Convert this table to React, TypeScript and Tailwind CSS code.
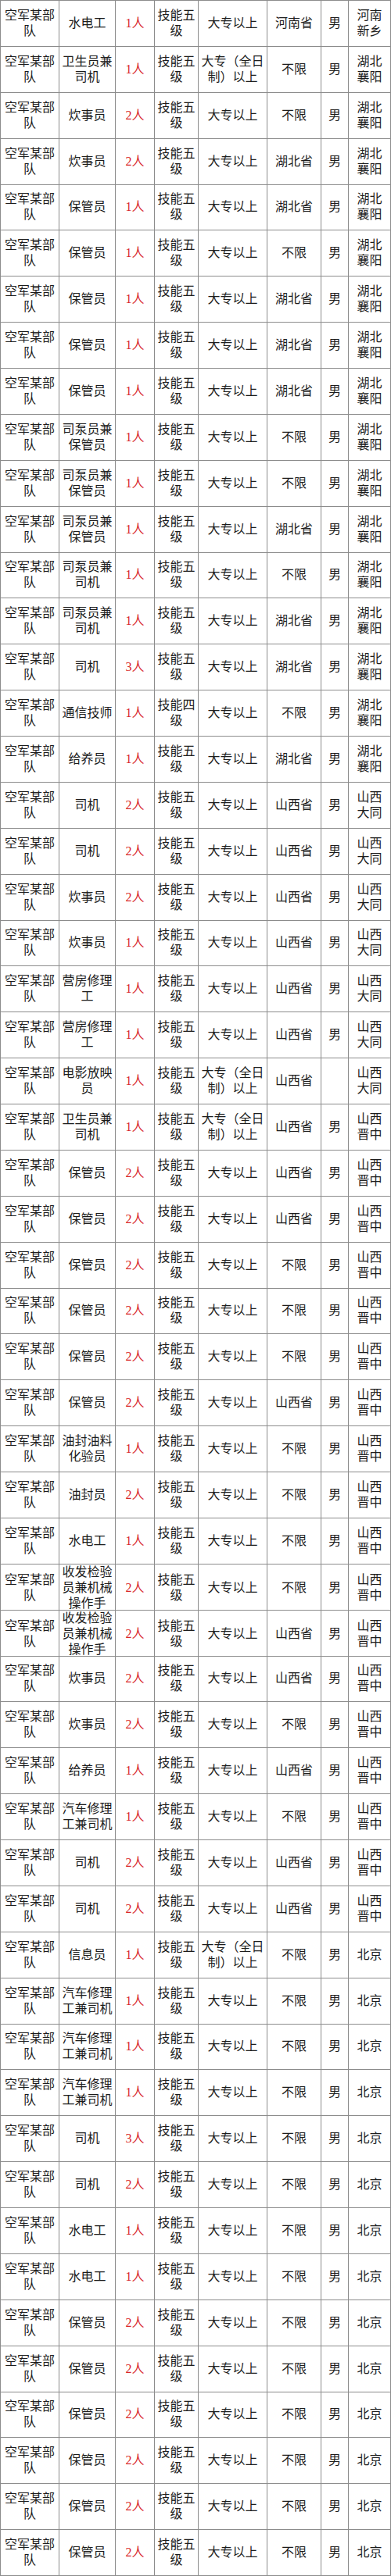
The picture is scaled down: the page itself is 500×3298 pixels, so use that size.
import React from "react";

type Row = [string, string, string, string, string, string, string];

const L5 = "技能五级";
const E1 = "大专以上";
const E2 = "大专（全日制）以上";

const rows: Row[] = [
  ["水电工", "1人", L5, E1, "河南省", "男", "河南新乡"],
  ["卫生员兼司机", "1人", L5, E2, "不限", "男", "湖北襄阳"],
  ["炊事员", "2人", L5, E1, "不限", "男", "湖北襄阳"],
  ["炊事员", "2人", L5, E1, "湖北省", "男", "湖北襄阳"],
  ["保管员", "1人", L5, E1, "湖北省", "男", "湖北襄阳"],
  ["保管员", "1人", L5, E1, "不限", "男", "湖北襄阳"],
  ["保管员", "1人", L5, E1, "湖北省", "男", "湖北襄阳"],
  ["保管员", "1人", L5, E1, "湖北省", "男", "湖北襄阳"],
  ["保管员", "1人", L5, E1, "湖北省", "男", "湖北襄阳"],
  ["司泵员兼保管员", "1人", L5, E1, "不限", "男", "湖北襄阳"],
  ["司泵员兼保管员", "1人", L5, E1, "不限", "男", "湖北襄阳"],
  ["司泵员兼保管员", "1人", L5, E1, "湖北省", "男", "湖北襄阳"],
  ["司泵员兼司机", "1人", L5, E1, "不限", "男", "湖北襄阳"],
  ["司泵员兼司机", "1人", L5, E1, "湖北省", "男", "湖北襄阳"],
  ["司机", "3人", L5, E1, "湖北省", "男", "湖北襄阳"],
  ["通信技师", "1人", "技能四级", E1, "不限", "男", "湖北襄阳"],
  ["给养员", "1人", L5, E1, "湖北省", "男", "湖北襄阳"],
  ["司机", "2人", L5, E1, "山西省", "男", "山西大同"],
  ["司机", "2人", L5, E1, "山西省", "男", "山西大同"],
  ["炊事员", "2人", L5, E1, "山西省", "男", "山西大同"],
  ["炊事员", "1人", L5, E1, "山西省", "男", "山西大同"],
  ["营房修理工", "1人", L5, E1, "山西省", "男", "山西大同"],
  ["营房修理工", "1人", L5, E1, "山西省", "男", "山西大同"],
  ["电影放映员", "1人", L5, E2, "山西省", "", "山西大同"],
  ["卫生员兼司机", "1人", L5, E2, "山西省", "男", "山西晋中"],
  ["保管员", "2人", L5, E1, "山西省", "男", "山西晋中"],
  ["保管员", "2人", L5, E1, "山西省", "男", "山西晋中"],
  ["保管员", "2人", L5, E1, "不限", "男", "山西晋中"],
  ["保管员", "2人", L5, E1, "不限", "男", "山西晋中"],
  ["保管员", "2人", L5, E1, "不限", "男", "山西晋中"],
  ["保管员", "2人", L5, E1, "山西省", "男", "山西晋中"],
  ["油封油料化验员", "1人", L5, E1, "不限", "男", "山西晋中"],
  ["油封员", "2人", L5, E1, "不限", "男", "山西晋中"],
  ["水电工", "1人", L5, E1, "不限", "男", "山西晋中"],
  ["收发检验员兼机械操作手", "2人", L5, E1, "不限", "男", "山西晋中"],
  ["收发检验员兼机械操作手", "2人", L5, E1, "山西省", "男", "山西晋中"],
  ["炊事员", "2人", L5, E1, "山西省", "男", "山西晋中"],
  ["炊事员", "2人", L5, E1, "不限", "男", "山西晋中"],
  ["给养员", "1人", L5, E1, "山西省", "男", "山西晋中"],
  ["汽车修理工兼司机", "1人", L5, E1, "不限", "男", "山西晋中"],
  ["司机", "2人", L5, E1, "山西省", "男", "山西晋中"],
  ["司机", "2人", L5, E1, "山西省", "男", "山西晋中"],
  ["信息员", "1人", L5, E2, "不限", "男", "北京"],
  ["汽车修理工兼司机", "1人", L5, E1, "不限", "男", "北京"],
  ["汽车修理工兼司机", "1人", L5, E1, "不限", "男", "北京"],
  ["汽车修理工兼司机", "1人", L5, E1, "不限", "男", "北京"],
  ["司机", "3人", L5, E1, "不限", "男", "北京"],
  ["司机", "2人", L5, E1, "不限", "男", "北京"],
  ["水电工", "1人", L5, E1, "不限", "男", "北京"],
  ["水电工", "1人", L5, E1, "不限", "男", "北京"],
  ["保管员", "2人", L5, E1, "不限", "男", "北京"],
  ["保管员", "2人", L5, E1, "不限", "男", "北京"],
  ["保管员", "2人", L5, E1, "不限", "男", "北京"],
  ["保管员", "2人", L5, E1, "不限", "男", "北京"],
  ["保管员", "2人", L5, E1, "不限", "男", "北京"],
  ["保管员", "2人", L5, E1, "不限", "男", "北京"],
];

const cell =
  "flex items-center justify-center text-center border-r border-[#8c8c8c] leading-[20px] break-all";

export default function App() {
  return (
    <div
      className="w-[500px] bg-white text-[16px] text-[#1c1c1c] border-t border-[#8c8c8c]"
      style={{ fontFamily: '"Liberation Serif", "Noto Sans CJK SC", serif' }}
    >
      {rows.map((r, i) => (
        <div
          key={i}
          className="grid grid-cols-[76px_72px_50px_56px_88px_69px_35px_54px] h-[58.875px] border-b border-[#8c8c8c]"
        >
          <div className={`${cell} border-l px-[4px]`}>空军某部队</div>
          <div
            className={`${cell} px-[3px] ${
              r[0].length > 8 ? "leading-[19px]" : ""
            }`}
          >
            {r[0]}
          </div>
          <div className={`${cell} px-[2px] text-[#d8262b]`}>{r[1]}</div>
          <div className={`${cell} px-[3px]`}>{r[2]}</div>
          <div className={`${cell} px-[3px]`}>{r[3]}</div>
          <div className={`${cell} px-[3px]`}>{r[4]}</div>
          <div className={`${cell} px-[2px]`}>{r[5]}</div>
          <div className={`${cell} px-[4px]`}>{r[6]}</div>
        </div>
      ))}
    </div>
  );
}
